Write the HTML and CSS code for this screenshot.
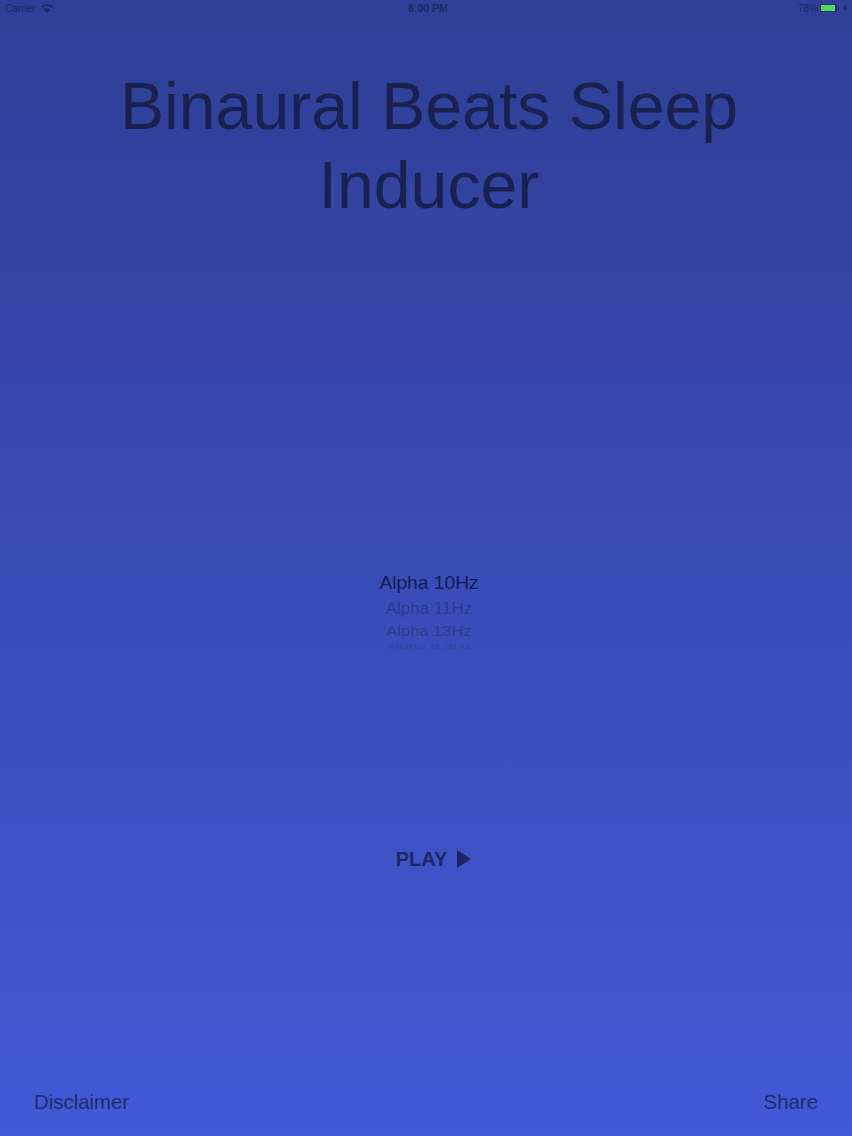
FILE: index.html
```html
<!DOCTYPE html>
<html lang="en">
<head>
<meta charset="utf-8">
<title>Binaural Beats Sleep Inducer</title>
<link rel="stylesheet" href="styles.css">
</head>
<body>
<div class="screen">
  <header class="status">
    <div class="status-left">
      <span>Carrier</span>
      <svg class="wifi" width="12" height="9" viewBox="0 0 12 9"><path d="M6 9 L2.6 5.4 C4.6 3.8 7.4 3.8 9.4 5.4 Z" fill="#1c2a66"/><path d="M0 2.8 C3.4-.6 8.6-.6 12 2.8 L10.8 4 C8 1.4 4 1.4 1.2 4 Z" fill="#1c2a66"/></svg>
    </div>
    <div class="status-time">8:00 PM</div>
    <div class="status-right">
      <span>78%</span>
      <span class="battery"><span class="battery-fill"></span></span>
      <span class="battery-tip"></span>
      <svg class="bolt" width="4" height="7" viewBox="0 0 4 7"><path d="M2.4 0 L0 4 H1.6 L1.2 7 L4 2.8 H2.3 Z" fill="#1c2a66"/></svg>
    </div>
  </header>
  <h1 class="title">Binaural Beats Sleep<br>Inducer</h1>
  <ul class="picker">
    <li class="opt opt-0">Alpha 10Hz</li>
    <li class="opt opt-1">Alpha 11Hz</li>
    <li class="opt opt-2">Alpha 13Hz</li>
    <li class="opt opt-3">Alpha 8.5Hz</li>
  </ul>
  <div class="play">
    <span>PLAY</span>
    <svg width="14" height="18" viewBox="0 0 14 18"><path d="M0 0 L14 9 L0 18 Z" fill="#1d2660"/></svg>
  </div>
  <footer class="footer">
    <span>Disclaimer</span>
    <span>Share</span>
  </footer>
</div>
</body>
</html>
```
FILE: styles.css
```css
* { box-sizing: border-box; }
html, body { margin: 0; padding: 0; }
body { font-family: "Liberation Sans", Arial, sans-serif; }
.screen {
  width: 852px;
  height: 1136px;
  overflow: hidden;
  display: flex;
  flex-direction: column;
  color: #1b2559;
  background: linear-gradient(180deg, #2f3f95 0%, #4159d6 100%);
}
.status {
  height: 16px;
  padding: 0 5px;
  display: grid;
  grid-template-columns: 1fr auto 1fr;
  align-items: center;
  font-size: 10px;
  color: #1c2a66;
}
.status-left { display: flex; align-items: center; gap: 5px; }
.status-time { font-weight: 700; font-size: 10.5px; padding-left: 4px; }
.status-right { display: flex; align-items: center; justify-content: flex-end; gap: 2px; }
.battery {
  width: 17px;
  height: 8px;
  padding: 0;
  border-radius: 1px;
  display: flex;
  background: #1c2a66;
}
.battery-fill { flex: 1; margin: 1px 2px 1px 1px; background: #4cd964; }
.battery-tip { width: 1px; height: 3px; margin-left: -1px; background: #1c2a66; }
.bolt { margin-left: 2px; }
.title {
  margin: 51px 0 0;
  padding-left: 6px;
  font-size: 66.2px;
  line-height: 79px;
  font-weight: 400;
  text-align: center;
  color: #19224f;
}
.picker {
  list-style: none;
  margin: 345px 0 0;
  padding: 0 0 0 6px;
  height: 82px;
  display: flex;
  flex-direction: column;
  align-items: center;
  overflow: hidden;
}
.opt { white-space: nowrap; text-align: center; }
.opt-0 { font-size: 19.2px; height: 27px; line-height: 26px; color: #131c56; }
.opt-1 { font-size: 17px; height: 24px; line-height: 24px; color: #2b3c8d; transform: scaleY(.94); }
.opt-2 { font-size: 16.5px; height: 20px; line-height: 20px; color: #2c3e92; transform: scaleY(.84); }
.opt-3 { font-size: 16px; height: 10px; line-height: 10px; color: #33479f; transform: scaleY(.5); }
.play {
  margin-top: 194px;
  padding-left: 15px;
  height: 26px;
  display: flex;
  align-items: center;
  justify-content: center;
  gap: 10px;
  font-size: 20px;
  font-weight: 700;
  color: #1d2660;
}
.footer {
  margin-top: auto;
  padding: 0 34px 21px;
  display: flex;
  justify-content: space-between;
  font-size: 20.4px;
  line-height: 26px;
  color: #1f2c6e;
}
```
